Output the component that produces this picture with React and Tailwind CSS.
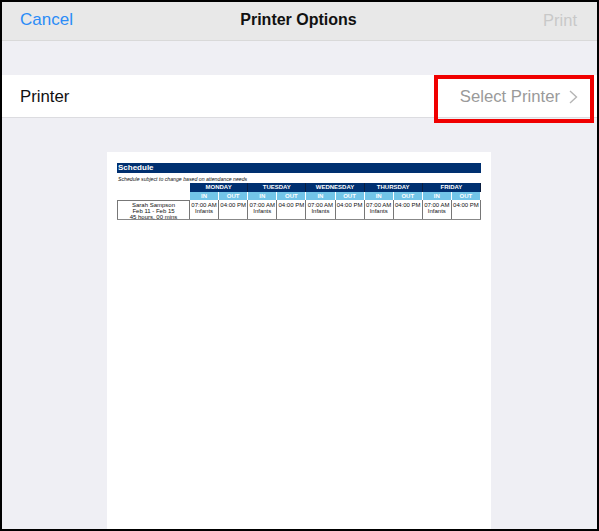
import React from 'react';

const days = ['MONDAY', 'TUESDAY', 'WEDNESDAY', 'THURSDAY', 'FRIDAY'];

const Schedule = () => {
    return (
        <div className="flex flex-col">
            <div className="h-[10px] bg-[#003070] text-white text-[8px] leading-[10px] font-bold pl-[1px]">Schedule</div>
            <div className="h-[10px] text-[5.2px] leading-[12px] italic text-[#111] pl-[1px]">Schedule subject to change based on attendance needs</div>

            <div className="flex">
                <div className="w-[73px] shrink-0"></div>
                <div className="flex-1 grid grid-cols-5">
                    {days.map((day) => (
                        <div key={day} className="h-[9px] bg-[#003070] text-white text-[6px] leading-[9px] font-bold text-center border-r border-[#0b1e3f]">{day}</div>
                    ))}
                </div>
            </div>

            <div className="flex">
                <div className="w-[73px] shrink-0"></div>
                <div className="flex-1 grid grid-cols-10">
                    {days.map((day) => (
                        <React.Fragment key={day}>
                            <div className="h-[8px] bg-[#72c5e8] text-white text-[6px] leading-[8px] font-bold text-center border-r border-white">IN</div>
                            <div className="h-[8px] bg-[#72c5e8] text-white text-[6px] leading-[8px] font-bold text-center border-r border-white">OUT</div>
                        </React.Fragment>
                    ))}
                </div>
            </div>

            <div className="flex border-b border-[#888] h-[20px]">
                <div className="w-[73px] shrink-0 border-x border-t border-[#777] text-center text-[6px] leading-[6px] text-[#111] pt-[1px]">
                    <div>Sarah Sampson</div>
                    <div>Feb 11 - Feb 15</div>
                    <div>45 hours, 00 mins</div>
                </div>
                <div className="flex-1 grid grid-cols-10">
                    {days.map((day) => (
                        <React.Fragment key={day}>
                            <div className="border-r border-[#777] text-center text-[6px] leading-[6px] text-[#111] pt-[2px] whitespace-nowrap overflow-hidden">
                                <div>07:00 AM</div>
                                <div>Infants</div>
                            </div>
                            <div className="border-r border-[#777] text-center text-[6px] leading-[6px] text-[#111] pt-[2px] whitespace-nowrap overflow-hidden">
                                04:00 PM
                            </div>
                        </React.Fragment>
                    ))}
                </div>
            </div>
        </div>
    );
};

const App = () => {
    return (
        <div className="relative w-[599px] h-[531px] border-2 border-black bg-[#efeff4] overflow-hidden font-['Liberation_Sans',Arial,sans-serif]">

            {/* Nav bar */}
            <div className="h-[39px] bg-[#e8e8e8] border-b border-[#d9d9d9] grid grid-cols-[1fr_auto_1fr] items-center pl-[18px] pr-[20px] pb-[2px]">
                <span className="text-[17px] text-[#2b8cf7]">Cancel</span>
                <span className="text-[16px] font-bold text-[#111]">Printer Options</span>
                <span className="text-[16.5px] text-[#c8c8c8] text-right">Print</span>
            </div>

            {/* Printer row */}
            <div className="mt-[34px] h-[43px] bg-white border-b border-[#dcdce0] flex items-center justify-between pl-[18px] pr-[19px] pt-[2px]">
                <span className="text-[16.8px] text-[#111]">Printer</span>
                <div className="flex items-center gap-[9px]">
                    <span className="text-[16.7px] text-[#9a9a9a]">Select Printer</span>
                    <svg width="9" height="14" viewBox="0 0 9 14" fill="none" stroke="#b5b5b5" strokeWidth="1.4">
                        <path d="M1 1l6.5 6L1 13" />
                    </svg>
                </div>
            </div>

            {/* Highlight box */}
            <div className="absolute left-[432px] top-[73px] w-[160px] h-[48px] border-4 border-[#f00000]"></div>

            {/* Page preview */}
            <div className="ml-[105px] mt-[34px] w-[384px] h-[400px] bg-white pt-[11px] px-[10px]">
                <Schedule />
            </div>
        </div>
    );
};

export default App;
